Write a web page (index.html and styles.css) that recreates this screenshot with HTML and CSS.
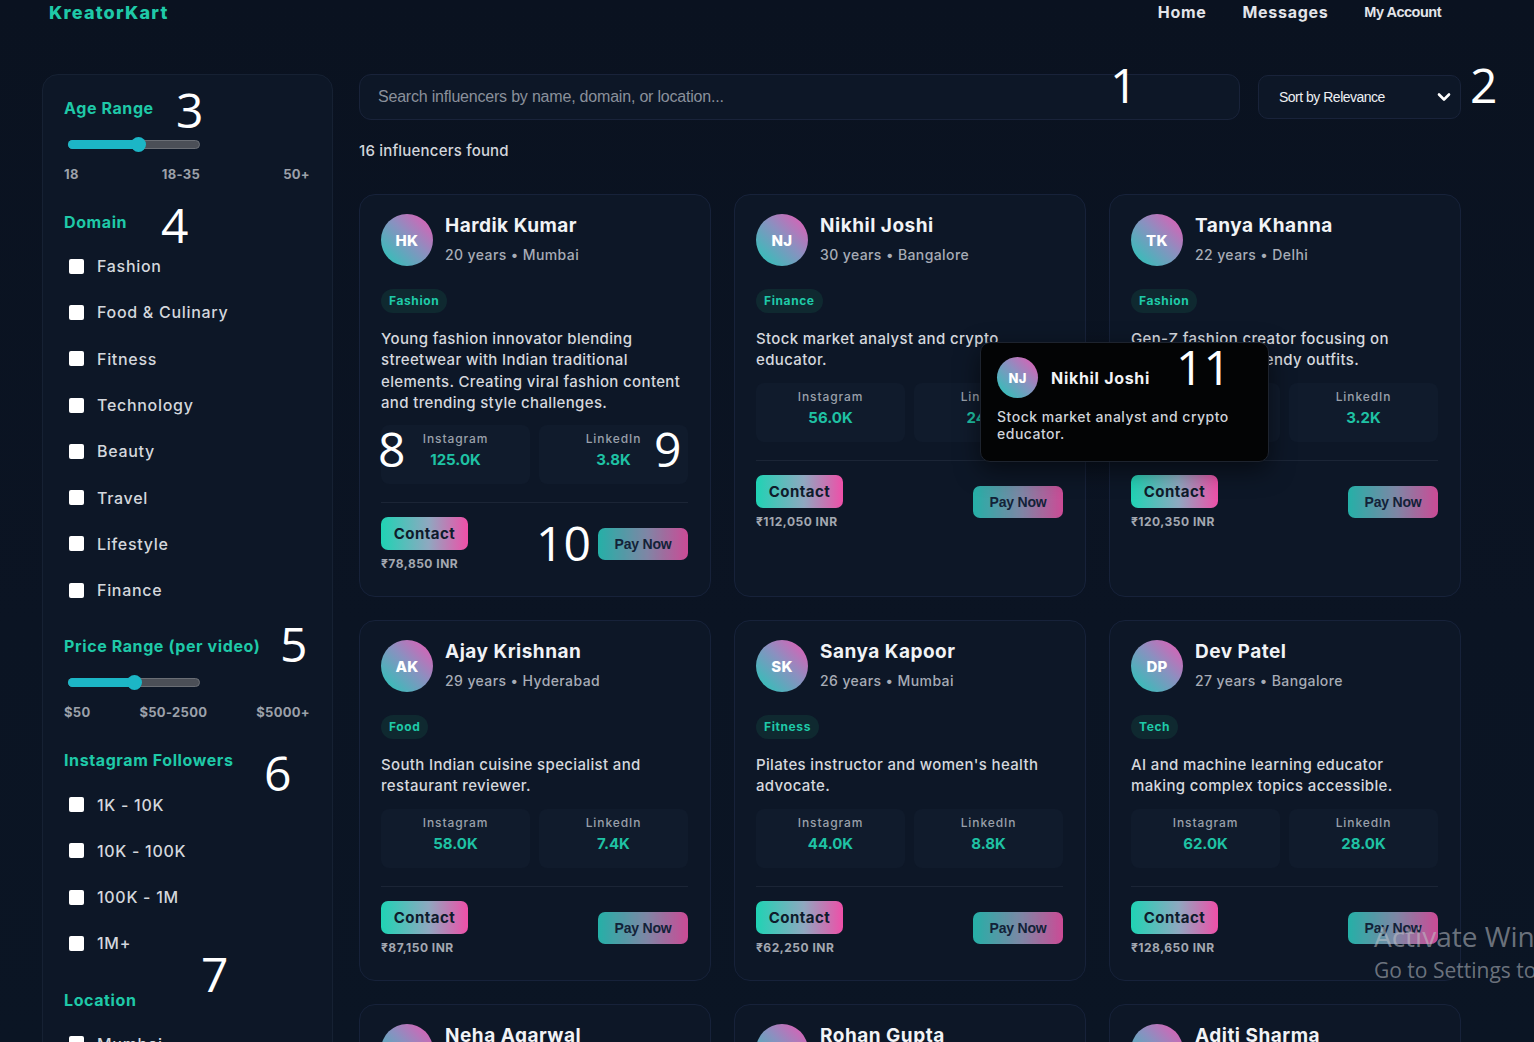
FILE: index.html
```html
<!DOCTYPE html>
<html lang="en">
<head>
<meta charset="utf-8">
<title>KreatorKart</title>
<link rel="stylesheet" href="styles.css">
</head>
<body>
<div class="page">
  <header class="topbar">
    <div class="logo">KreatorKart</div>
    <nav class="nav">
      <a href="#">Home</a>
      <a href="#">Messages</a>
      <a href="#" class="nav-acc">My Account</a>
    </nav>
  </header>

  <div class="layout">
    <aside class="sidebar">
      <h3 class="sec-title">Age Range</h3>
      <div class="slider"><div class="fill fill-age"></div><div class="thumb thumb-age"></div></div>
      <div class="range-labels"><span>18</span><span>18-35</span><span>50+</span></div>

      <h3 class="sec-title sec-gap">Domain</h3>
      <ul class="checks">
        <li><span class="box"></span>Fashion</li>
        <li><span class="box"></span>Food &amp; Culinary</li>
        <li><span class="box"></span>Fitness</li>
        <li><span class="box"></span>Technology</li>
        <li><span class="box"></span>Beauty</li>
        <li><span class="box"></span>Travel</li>
        <li><span class="box"></span>Lifestyle</li>
        <li><span class="box"></span>Finance</li>
      </ul>

      <h3 class="sec-title sec-gap2">Price Range (per video)</h3>
      <div class="slider"><div class="fill fill-price"></div><div class="thumb thumb-price"></div></div>
      <div class="range-labels"><span>$50</span><span>$50-2500</span><span>$5000+</span></div>

      <h3 class="sec-title sec-gap">Instagram Followers</h3>
      <ul class="checks">
        <li><span class="box"></span>1K - 10K</li>
        <li><span class="box"></span>10K - 100K</li>
        <li><span class="box"></span>100K - 1M</li>
        <li><span class="box"></span>1M+</li>
      </ul>

      <h3 class="sec-title sec-gap2">Location</h3>
      <ul class="checks">
        <li><span class="box"></span>Mumbai</li>
        <li><span class="box"></span>Delhi</li>
      </ul>
    </aside>

    <main class="main">
      <div class="search-row">
        <div class="search">Search influencers by name, domain, or location...</div>
        <div class="sort">
          <span>Sort by Relevance</span>
          <svg width="14" height="10" viewBox="0 0 14 10"><path d="M2 2.5 L7 7.5 L12 2.5" fill="none" stroke="#ffffff" stroke-width="2.6" stroke-linecap="round" stroke-linejoin="round"/></svg>
        </div>
      </div>
      <div class="count">16 influencers found</div>

      <div class="grid">
        <article class="card">
          <div class="card-head"><div class="avatar">HK</div><div><div class="name">Hardik Kumar</div><div class="meta">20 years • Mumbai</div></div></div>
          <span class="tag">Fashion</span>
          <p class="desc">Young fashion innovator blending streetwear with Indian traditional elements. Creating viral fashion content and trending style challenges.</p>
          <div class="stats"><div class="stat"><span class="s-label">Instagram</span><span class="s-val">125.0K</span></div><div class="stat"><span class="s-label">LinkedIn</span><span class="s-val">3.8K</span></div></div>
          <div class="divider"></div>
          <div class="actions"><div><button class="contact">Contact</button><div class="price">₹78,850 INR</div></div><button class="pay">Pay Now</button></div>
        </article>

        <article class="card">
          <div class="card-head"><div class="avatar">NJ</div><div><div class="name">Nikhil Joshi</div><div class="meta">30 years • Bangalore</div></div></div>
          <span class="tag">Finance</span>
          <p class="desc">Stock market analyst and crypto educator.</p>
          <div class="stats"><div class="stat"><span class="s-label">Instagram</span><span class="s-val">56.0K</span></div><div class="stat"><span class="s-label">LinkedIn</span><span class="s-val">24.5K</span></div></div>
          <div class="divider"></div>
          <div class="actions"><div><button class="contact">Contact</button><div class="price">₹112,050 INR</div></div><button class="pay">Pay Now</button></div>
        </article>

        <article class="card">
          <div class="card-head"><div class="avatar">TK</div><div><div class="name">Tanya Khanna</div><div class="meta">22 years • Delhi</div></div></div>
          <span class="tag">Fashion</span>
          <p class="desc">Gen-Z fashion creator focusing on sustainable and trendy outfits.</p>
          <div class="stats"><div class="stat"><span class="s-label">Instagram</span><span class="s-val">89.0K</span></div><div class="stat"><span class="s-label">LinkedIn</span><span class="s-val">3.2K</span></div></div>
          <div class="divider"></div>
          <div class="actions"><div><button class="contact">Contact</button><div class="price">₹120,350 INR</div></div><button class="pay">Pay Now</button></div>
        </article>

        <article class="card">
          <div class="card-head"><div class="avatar">AK</div><div><div class="name">Ajay Krishnan</div><div class="meta">29 years • Hyderabad</div></div></div>
          <span class="tag">Food</span>
          <p class="desc">South Indian cuisine specialist and restaurant reviewer.</p>
          <div class="stats"><div class="stat"><span class="s-label">Instagram</span><span class="s-val">58.0K</span></div><div class="stat"><span class="s-label">LinkedIn</span><span class="s-val">7.4K</span></div></div>
          <div class="divider"></div>
          <div class="actions"><div><button class="contact">Contact</button><div class="price">₹87,150 INR</div></div><button class="pay">Pay Now</button></div>
        </article>

        <article class="card">
          <div class="card-head"><div class="avatar">SK</div><div><div class="name">Sanya Kapoor</div><div class="meta">26 years • Mumbai</div></div></div>
          <span class="tag">Fitness</span>
          <p class="desc">Pilates instructor and women's health advocate.</p>
          <div class="stats"><div class="stat"><span class="s-label">Instagram</span><span class="s-val">44.0K</span></div><div class="stat"><span class="s-label">LinkedIn</span><span class="s-val">8.8K</span></div></div>
          <div class="divider"></div>
          <div class="actions"><div><button class="contact">Contact</button><div class="price">₹62,250 INR</div></div><button class="pay">Pay Now</button></div>
        </article>

        <article class="card">
          <div class="card-head"><div class="avatar">DP</div><div><div class="name">Dev Patel</div><div class="meta">27 years • Bangalore</div></div></div>
          <span class="tag">Tech</span>
          <p class="desc">AI and machine learning educator making complex topics accessible.</p>
          <div class="stats"><div class="stat"><span class="s-label">Instagram</span><span class="s-val">62.0K</span></div><div class="stat"><span class="s-label">LinkedIn</span><span class="s-val">28.0K</span></div></div>
          <div class="divider"></div>
          <div class="actions"><div><button class="contact">Contact</button><div class="price">₹128,650 INR</div></div><button class="pay">Pay Now</button></div>
        </article>

        <article class="card">
          <div class="card-head"><div class="avatar">NA</div><div><div class="name">Neha Agarwal</div><div class="meta">24 years • Delhi</div></div></div>
        </article>
        <article class="card">
          <div class="card-head"><div class="avatar">RG</div><div><div class="name">Rohan Gupta</div><div class="meta">31 years • Pune</div></div></div>
        </article>
        <article class="card">
          <div class="card-head"><div class="avatar">AS</div><div><div class="name">Aditi Sharma</div><div class="meta">25 years • Mumbai</div></div></div>
        </article>
      </div>
    </main>
  </div>

  <div class="tooltip">
    <div class="tt-head"><div class="avatar avatar-sm">NJ</div><div class="tt-name">Nikhil Joshi</div></div>
    <p class="tt-desc">Stock market analyst and crypto educator.</p>
  </div>

  <div class="watermark">
    <div class="wm1">Activate Windows</div>
    <div class="wm2">Go to Settings to activate Windows.</div>
  </div>

  <span class="mark m1">1</span>
  <span class="mark m2">2</span>
  <span class="mark m3">3</span>
  <span class="mark m4">4</span>
  <span class="mark m5">5</span>
  <span class="mark m6">6</span>
  <span class="mark m7">7</span>
  <span class="mark m8">8</span>
  <span class="mark m9">9</span>
  <span class="mark m10">10</span>
  <span class="mark m11">11</span>
</div>
</body>
</html>
```

FILE: styles.css
```css
* { box-sizing: border-box; margin: 0; padding: 0; }

html, body { background: #0a1321; }

body {
  font-family: Inter, "Noto Sans", "DejaVu Sans", sans-serif;
  color: #d6d9df;
  overflow: hidden;
}

.page {
  position: relative;
  width: 1534px;
  height: 1042px;
  overflow: hidden;
  background: linear-gradient(180deg, #0a1220 0%, #0b1423 60%, #0b1524 100%);
}

/* header */
.topbar {
  display: flex;
  justify-content: space-between;
  align-items: center;
  height: 24px;
  padding: 0 93px 0 49px;
}
.logo {
  color: #1fc9a8;
  font-weight: 800;
  font-size: 18px;
  letter-spacing: 1.2px;
}
.nav { display: flex; align-items: center; gap: 36px; }
.nav a {
  color: #e3e5ea;
  text-decoration: none;
  font-weight: 700;
  font-size: 16px;
  letter-spacing: 0.7px;
}
.nav a.nav-acc {
  font-family: "Liberation Sans", Arial, sans-serif;
  font-size: 14.5px;
  letter-spacing: -0.5px;
}

/* layout */
.layout {
  display: flex;
  align-items: flex-start;
  gap: 26px;
  padding-left: 42px;
  margin-top: 50px;
}

/* sidebar */
.sidebar {
  width: 291px;
  height: 1010px;
  background: #0d1727;
  border: 1px solid #162133;
  border-radius: 16px;
  padding: 23px 22px 0 21px;
}
.sec-title {
  color: #1fc9a8;
  font-size: 16px;
  font-weight: 700;
  line-height: 20px;
  letter-spacing: 0.6px;
  white-space: nowrap;
}
.sec-gap { margin-top: 30px; }
.sec-gap2 { margin-top: 23px; }

.slider {
  position: relative;
  width: 132px;
  height: 9px;
  margin: 22px 0 0 4px;
  background: #4b4f57;
  border: 1px solid #6a6e75;
  border-radius: 5px;
}
.fill {
  position: absolute;
  left: -1px; top: -1px; bottom: -1px;
  background: #1cb6c6;
  border-radius: 5px;
}
.fill-age { width: 70px; }
.fill-price { width: 66px; }
.thumb {
  position: absolute;
  top: -4px;
  width: 15px; height: 15px;
  border-radius: 50%;
  background: #1cb6c6;
}
.thumb-age { left: 62px; }
.thumb-price { left: 58px; }

.range-labels {
  display: flex;
  justify-content: space-between;
  margin-top: 17px;
  font-size: 13px;
  font-weight: 700;
  line-height: 16px;
  color: #9ca1aa;
  letter-spacing: 0.3px;
}

.checks { list-style: none; margin-top: 11px; }
.checks li {
  display: flex;
  align-items: center;
  gap: 13px;
  height: 46.3px;
  padding-left: 5px;
  font-size: 16px;
  font-weight: 500;
  color: #d4d7dd;
  letter-spacing: 0.7px;
}
.box {
  width: 15px; height: 15px;
  background: #ffffff;
  border-radius: 2px;
  flex: none;
}

/* main */
.main { width: 1102px; }

.search-row { display: flex; gap: 18px; align-items: flex-start; }
.search {
  flex: 1;
  height: 46px;
  display: flex;
  align-items: center;
  padding-left: 18px;
  background: #0d1727;
  border: 1px solid #19233a;
  border-radius: 12px;
  font-family: "Liberation Sans", Arial, sans-serif;
  font-size: 16px;
  color: #8a909b;
  letter-spacing: -0.2px;
}
.sort {
  width: 203px;
  height: 44px;
  margin-top: 1px;
  display: flex;
  align-items: center;
  justify-content: space-between;
  padding: 0 9px 0 20px;
  background: #0d1727;
  border: 1px solid #19233a;
  border-radius: 10px;
  font-family: "Liberation Sans", Arial, sans-serif;
  font-size: 14px;
  color: #eef0f3;
  letter-spacing: -0.5px;
}

.count {
  margin-top: 21px;
  font-size: 15px;
  font-weight: 500;
  line-height: 20px;
  color: #d3d6dc;
  letter-spacing: 0.2px;
}

.grid {
  display: grid;
  grid-template-columns: repeat(3, 352px);
  gap: 23px;
  margin-top: 33px;
}

.card {
  background: #0d1727;
  border: 1px solid #17223a;
  border-radius: 16px;
  padding: 19px 22px 25px 21px;
  min-height: 200px;
}
.card-head { display: flex; gap: 12px; align-items: flex-start; }
.avatar {
  width: 52px; height: 52px;
  border-radius: 50%;
  flex: none;
  display: flex;
  align-items: center;
  justify-content: center;
  background: linear-gradient(45deg, #22c9b7 0%, #8b90c0 55%, #ec56b3 100%);
  color: #ffffff;
  font-weight: 800;
  font-size: 15px;
  letter-spacing: 0.3px;
}
.name {
  font-size: 19px;
  font-weight: 700;
  line-height: 24px;
  color: #f1f3f6;
  letter-spacing: 0.5px;
}
.meta {
  margin-top: 8px;
  font-size: 14px;
  font-weight: 500;
  line-height: 18px;
  color: #a7acb6;
  letter-spacing: 0.4px;
}
.tag {
  display: inline-block;
  margin-top: 23px;
  height: 24px;
  line-height: 24px;
  padding: 0 8px;
  border-radius: 12px;
  background: #0f2930;
  color: #1fc9a8;
  font-size: 12px;
  font-weight: 700;
  letter-spacing: 0.6px;
}
.desc {
  margin-top: 15px;
  font-size: 15px;
  font-weight: 500;
  line-height: 21.3px;
  color: #d5d8de;
  letter-spacing: 0.35px;
}
.stats {
  display: grid;
  grid-template-columns: 1fr 1fr;
  gap: 9px;
  margin-top: 12px;
}
.stat {
  height: 59px;
  background: #101b2c;
  border-radius: 8px;
  display: flex;
  flex-direction: column;
  align-items: center;
  padding-top: 6px;
}
.s-label {
  font-size: 12px;
  font-weight: 500;
  line-height: 16px;
  color: #9aa0aa;
  letter-spacing: 0.9px;
}
.s-val {
  margin-top: 3px;
  font-size: 15px;
  font-weight: 700;
  line-height: 20px;
  color: #1fc2a4;
  letter-spacing: 0px;
}
.divider { height: 1px; background: #1b2536; margin-top: 18px; }
.actions {
  display: flex;
  justify-content: space-between;
  align-items: center;
  margin-top: 14px;
}
.contact {
  width: 87px; height: 33px;
  border: none;
  border-radius: 7px;
  background: linear-gradient(90deg, #1fd3b4 0%, #8fa8c0 55%, #ef4fa8 100%);
  color: #0f1b2b;
  font-family: Inter, sans-serif;
  font-weight: 700;
  font-size: 15px;
  letter-spacing: 0.5px;
}
.price {
  margin-top: 7px;
  font-size: 12px;
  font-weight: 700;
  line-height: 14px;
  color: #a3a8b1;
  letter-spacing: 0.5px;
}
.pay {
  width: 90px; height: 32px;
  border: none;
  border-radius: 7px;
  background: linear-gradient(90deg, #27bdb2 0%, #8a8fb0 55%, #dc4f9f 100%);
  color: #14233a;
  font-family: "Liberation Sans", Arial, sans-serif;
  font-weight: 700;
  font-size: 14px;
  letter-spacing: -0.2px;
  opacity: 0.92;
}

/* tooltip */
.tooltip {
  position: absolute;
  left: 980px;
  top: 342px;
  width: 289px;
  height: 120px;
  background: #030405;
  border: 1px solid #1d232e;
  border-radius: 10px;
  padding: 14px 16px;
  box-shadow: 0 8px 24px rgba(0, 0, 0, 0.5);
}
.tt-head { display: flex; align-items: center; gap: 13px; }
.avatar-sm { width: 41px; height: 41px; font-size: 13px; }
.tt-name {
  font-size: 16px;
  font-weight: 700;
  color: #f2f3f5;
  letter-spacing: 0.7px;
}
.tt-desc {
  margin-top: 10px;
  font-size: 14px;
  font-weight: 500;
  line-height: 17px;
  color: #cfd3d9;
  letter-spacing: 0.5px;
}

/* watermark */
.watermark {
  position: absolute;
  left: 1374px;
  top: 917px;
  font-family: "Open Sans", "Noto Sans", sans-serif;
  color: rgba(190, 194, 200, 0.55);
  white-space: nowrap;
}
.wm1 { font-size: 28px; line-height: 38px; }
.wm2 { font-size: 21px; line-height: 30px; }

/* annotation numbers */
.mark {
  position: absolute;
  font-family: "Open Sans", "DejaVu Sans", sans-serif;
  font-weight: 400;
  font-size: 48px;
  line-height: 48px;
  color: #ffffff;
}
.m1 { left: 1110px; top: 61px; }
.m2 { left: 1470px; top: 61px; }
.m3 { left: 176px; top: 86px; }
.m4 { left: 161px; top: 201px; }
.m5 { left: 280px; top: 620px; }
.m6 { left: 264px; top: 749px; }
.m7 { left: 201px; top: 950px; }
.m8 { left: 378px; top: 425px; }
.m9 { left: 654px; top: 425px; }
.m10 { left: 536px; top: 519px; }
.m11 { left: 1176px; top: 343px; }
```
